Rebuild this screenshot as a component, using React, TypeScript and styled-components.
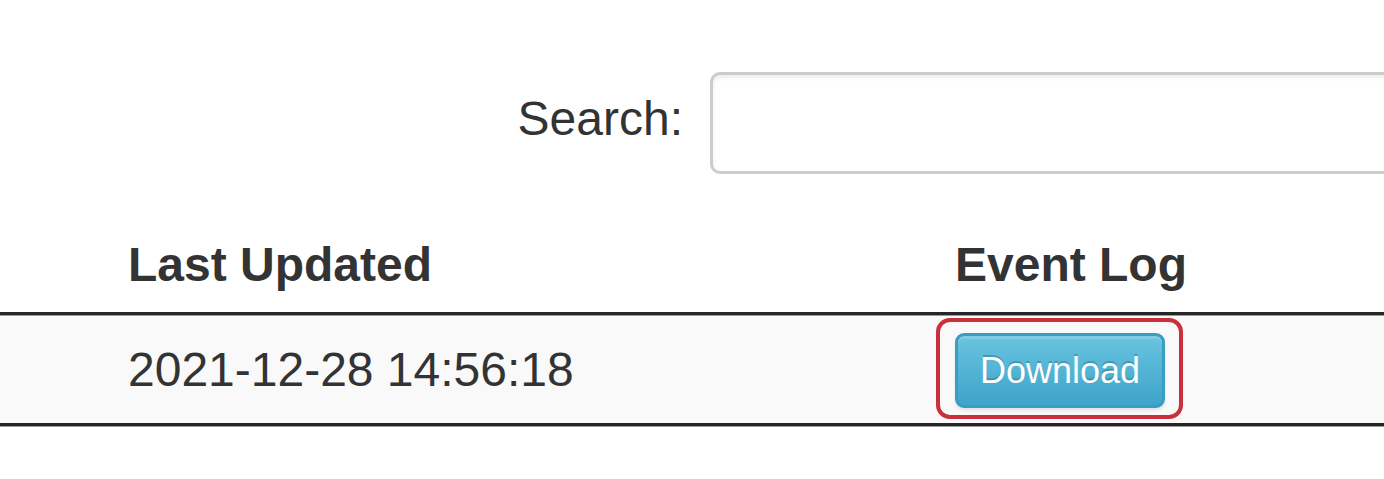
import React from 'react';
import styled, { createGlobalStyle } from 'styled-components';

const GlobalStyle = createGlobalStyle`
  html, body {
    margin: 0;
    padding: 0;
    background: #ffffff;
    overflow: hidden;
  }
  body {
    font-family: "Liberation Sans", Arial, sans-serif;
    color: #333333;
  }
`;

const Page = styled.div`
  width: 1384px;
  padding-top: 72px;
`;

const Toolbar = styled.div`
  display: flex;
  align-items: center;
  justify-content: flex-end;
  margin-right: -26px;
`;

const SearchLabel = styled.label`
  font-size: 48px;
  line-height: 1;
  margin-right: 27px;
  margin-bottom: 8px;
`;

const SearchInput = styled.input`
  box-sizing: border-box;
  width: 700px;
  height: 102px;
  border: 3px solid #cccccc;
  border-radius: 10px;
  background: #ffffff;
  box-shadow: inset 0 3px 4px rgba(0, 0, 0, 0.075);
  outline: none;
  padding: 0 30px;
  font-size: 41px;
  font-family: inherit;
`;

const Table = styled.table`
  width: 100%;
  margin-top: 56px;
  border-collapse: separate;
  border-spacing: 0;
  table-layout: fixed;
  border-bottom: 1px solid #9a9a9a;
`;

const HeadCell = styled.th<{ $width?: number }>`
  box-sizing: border-box;
  width: ${({ $width }) => ($width ? `${$width}px` : 'auto')};
  text-align: left;
  font-size: 48px;
  font-weight: bold;
  line-height: 69px;
  padding: 0 27px 13px ${({ $width }) => ($width ? '128px' : '27px')};
  border-bottom: 3px solid #262626;
  white-space: nowrap;
`;

const Row = styled.tr`
  background: #f9f9f9;
`;

const Cell = styled.td<{ $first?: boolean }>`
  height: 111px;
  box-sizing: border-box;
  font-size: 48px;
  line-height: 69px;
  padding: 0 27px 0 ${({ $first }) => ($first ? '128px' : '27px')};
  vertical-align: middle;
  border-top: 1px solid #9a9a9a;
  border-bottom: 3px solid #262626;
  white-space: nowrap;
`;

const Highlight = styled.span`
  position: relative;
  display: inline-block;
  vertical-align: middle;
  margin-top: 2px;

  &::after {
    content: '';
    position: absolute;
    top: -15px;
    left: -19px;
    right: -18px;
    bottom: -11px;
    border: 4px solid #c9303c;
    border-radius: 14px;
    pointer-events: none;
  }
`;

const InfoButton = styled.button`
  display: block;
  box-sizing: border-box;
  height: 75px;
  padding: 0 22px;
  font-family: inherit;
  font-size: 36px;
  line-height: 69px;
  color: #ffffff;
  text-shadow: 0 -2px 0 rgba(0, 0, 0, 0.2);
  background-image: linear-gradient(to bottom, #68c4e0 0%, #3ea4c9 100%);
  border: 3px solid #3a9dc2;
  border-radius: 9px;
  box-shadow: inset 0 3px 0 rgba(255, 255, 255, 0.15), 0 3px 3px rgba(0, 0, 0, 0.075);
  cursor: pointer;
`;

export default function App() {
  return (
    <Page>
      <GlobalStyle />
      <Toolbar>
        <SearchLabel htmlFor="search">Search:</SearchLabel>
        <SearchInput id="search" type="search" />
      </Toolbar>
      <Table>
        <thead>
          <tr>
            <HeadCell $width={928}>Last Updated</HeadCell>
            <HeadCell>Event Log</HeadCell>
          </tr>
        </thead>
        <tbody>
          <Row>
            <Cell $first>2021-12-28 14:56:18</Cell>
            <Cell>
              <Highlight>
                <InfoButton type="button">Download</InfoButton>
              </Highlight>
            </Cell>
          </Row>
        </tbody>
      </Table>
    </Page>
  );
}
